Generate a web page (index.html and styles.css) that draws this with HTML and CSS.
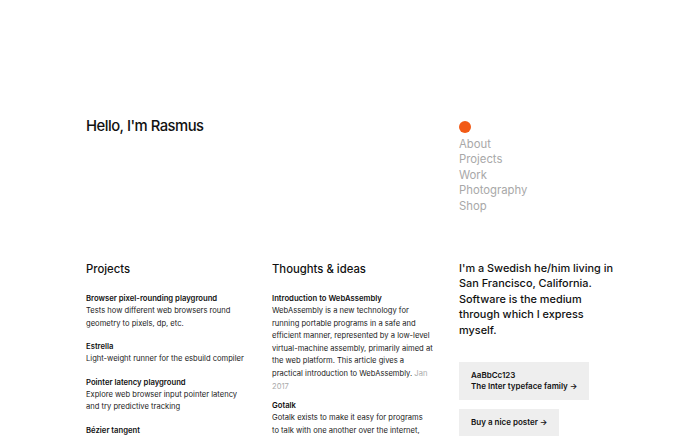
FILE: index.html
```html
<!DOCTYPE html>
<html lang="en">
<head>
  <meta charset="UTF-8">
  <meta name="viewport" content="width=device-width, initial-scale=1.0">
  <title>Rasmus</title>
  <link rel="stylesheet" href="styles.css">
</head>
<body>
  <div class="page">
    <header class="top">
      <h1 class="name">Hello, I'm Rasmus</h1>
      <nav class="menu">
        <span class="dot"></span>
        <a href="#">About</a>
        <a href="#">Projects</a>
        <a href="#">Work</a>
        <a href="#">Photography</a>
        <a href="#">Shop</a>
      </nav>
    </header>

    <div class="columns">
      <section class="col">
        <h2>Projects</h2>
        <div class="item">
          <h3>Browser pixel-rounding playground</h3>
          <p>Tests how different web browsers round geometry to pixels, dp, etc.</p>
        </div>
        <div class="item">
          <h3>Estrella</h3>
          <p>Light-weight runner for the esbuild compiler</p>
        </div>
        <div class="item">
          <h3>Pointer latency playground</h3>
          <p>Explore web browser input pointer latency and try predictive tracking</p>
        </div>
        <div class="item">
          <h3>Bézier tangent</h3>
          <p>Interactive demo of tangents on a cubic curve</p>
        </div>
      </section>

      <section class="col">
        <h2>Thoughts &amp; ideas</h2>
        <div class="item item-post">
          <h3>Introduction to WebAssembly</h3>
          <p>WebAssembly is a new technology for running portable programs in a safe and efficient manner, represented by a low-level virtual-machine assembly, primarily aimed at the web platform. This article gives a practical introduction to WebAssembly. <span class="date">Jan 2017</span></p>
        </div>
        <div class="item item-post">
          <h3>Gotalk</h3>
          <p class="narrow">Gotalk exists to make it easy for programs to talk with one another over the internet, like a web app coordinating with a web server.</p>
        </div>
      </section>

      <section class="col">
        <p class="about">I'm a Swedish he/him living in San Francisco, California. Software is the medium through which I express myself.</p>
        <a class="card" href="#">
          <span>AaBbCc123</span>
          <span>The Inter typeface family →</span>
        </a>
        <a class="card" href="#">
          <span>Buy a nice poster →</span>
        </a>
      </section>
    </div>
  </div>
</body>
</html>
```

FILE: styles.css
```css
body {
  font-family: Inter, "Noto Sans", sans-serif;
  margin: 0;
  background-color: #fff;
  color: #111;
}

a {
  color: inherit;
  text-decoration: none;
}

.page {
  padding: 116px 0 0 86px;
}

.top {
  display: grid;
  grid-template-columns: 373px 187px;
}

.name {
  margin: 0;
  font-size: 14.8px;
  line-height: 20px;
  font-weight: 500;
  letter-spacing: -0.5px;
}

.menu {
  display: flex;
  flex-direction: column;
  align-items: flex-start;
  padding-top: 5px;
}

.menu a {
  font-size: 11.3px;
  line-height: 15.6px;
  color: #a8a8a8;
}

.dot {
  width: 12px;
  height: 12px;
  border-radius: 50%;
  background-color: #f25a16;
  margin-bottom: 3.5px;
}

.columns {
  display: grid;
  grid-template-columns: 186px 187px 187px;
  margin-top: 46.5px;
}

.col h2 {
  margin: 0 0 15px;
  font-size: 11.3px;
  line-height: 16px;
  font-weight: 500;
}

.item {
  margin-bottom: 10px;
}

.item-post {
  margin-bottom: 6px;
}

.item h3 {
  margin: 0;
  font-size: 7.7px;
  line-height: 13px;
  font-weight: 600;
}

.item p {
  max-width: 163px;
  margin: 0;
  font-size: 7.6px;
  line-height: 12.6px;
  color: #222;
}

.item p.narrow {
  max-width: 158px;
}

.date {
  color: #aaa;
}

.about {
  max-width: 158px;
  margin: 0 0 24px;
  font-size: 10.9px;
  line-height: 15.5px;
  font-weight: 500;
}

.card {
  display: flex;
  flex-direction: column;
  align-items: flex-start;
  width: max-content;
  background-color: #eee;
  padding: 8px 12px;
  margin-bottom: 9px;
  font-size: 8px;
  line-height: 11px;
  font-weight: 600;
}
```
